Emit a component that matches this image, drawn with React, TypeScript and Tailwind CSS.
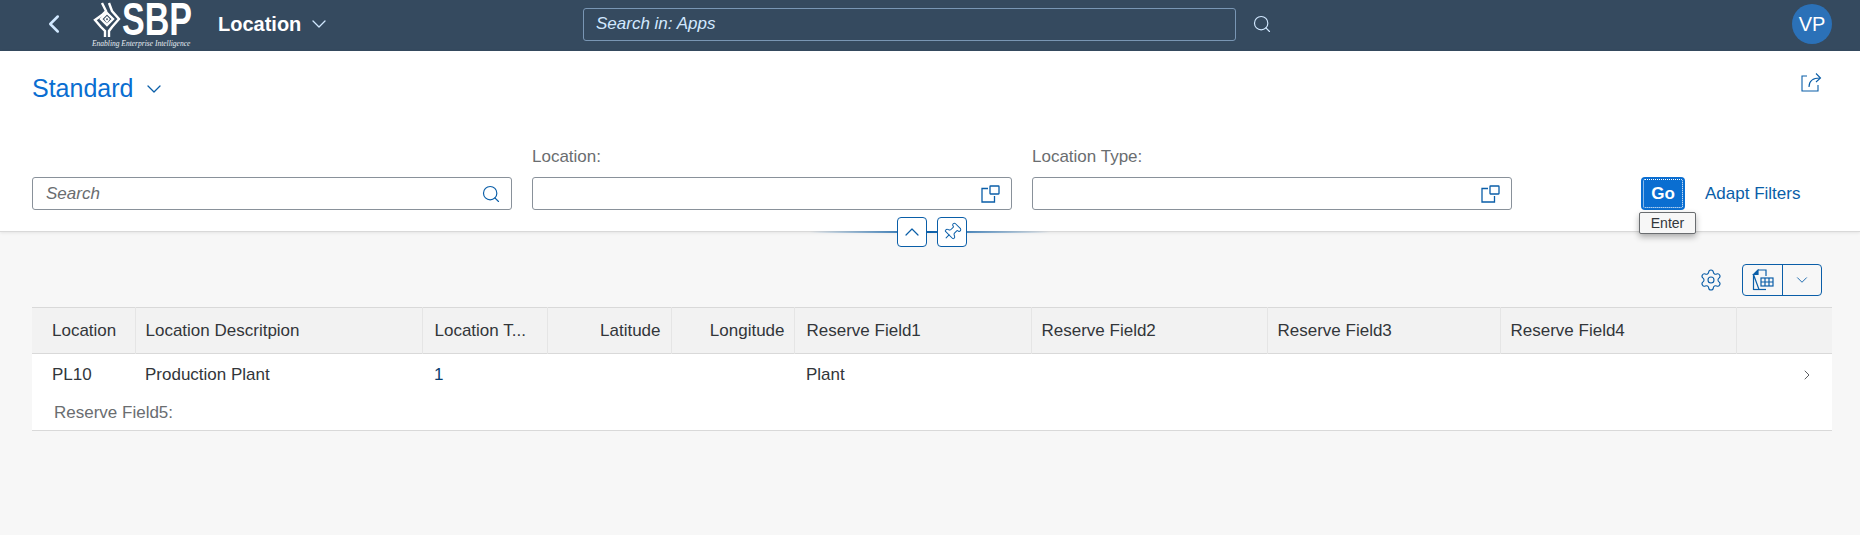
import { ChevronDown, ChevronLeft, ChevronRight, ChevronUp, Search, Settings, Pin } from "lucide-react";

const columns = [
  { label: "Location", width: "w-[103px]", pad: "pl-[20px] pr-2" },
  { label: "Location Descritpion", width: "w-[287px]", pad: "px-[10px]" },
  { label: "Location T...", width: "w-[125px]", pad: "px-[12px]" },
  { label: "Latitude", width: "w-[124px]", pad: "px-[10px] text-right" },
  { label: "Longitude", width: "w-[123px]", pad: "pl-2 pr-[9px] text-right" },
  { label: "Reserve Field1", width: "w-[237px]", pad: "px-[12px]" },
  { label: "Reserve Field2", width: "w-[236px]", pad: "px-[10px]" },
  { label: "Reserve Field3", width: "w-[233px]", pad: "px-[10px]" },
  { label: "Reserve Field4", width: "w-[236px]", pad: "px-[10px]" },
  { label: "", width: "w-[96px]", pad: "" },
];

function Logo() {
  return (
    <div className="w-[100px] h-[51px] flex flex-col items-start">
      <div className="flex items-center h-[39px] text-white">
        <svg width="30" height="36" viewBox="0 0 30 36" fill="none" stroke="#ffffff" strokeWidth="2.4">
          <path d="M10 1 L14 9 L10 13 L3 18 L9 25 L13 29 L13 35" />
          <path d="M17 1 L20 9 L27 17 L20 25 L17 29 L17 35" />
          <path d="M15 11 L21 17 L15 23 L9 17 Z" />
          <path d="M15 15 L17 17 L15 20 L13 17 Z" strokeWidth="1.4" />
        </svg>
        <span className="font-['Liberation_Sans'] font-bold text-[46px] leading-[39px] scale-x-[0.74] origin-left w-[95px] -mr-[25px] whitespace-nowrap">SBP</span>
      </div>
      <span className="font-['Liberation_Serif'] italic text-[7.5px] leading-[10px] text-[#e8edf2] whitespace-nowrap">Enabling Enterprise Intelligence</span>
    </div>
  );
}

function CopyIcon() {
  return (
    <svg width="20" height="18" viewBox="0 0 20 18" fill="none" stroke="#0a5ea8" strokeWidth="1.3">
      <path d="M7 3.5 H1 V17 H13.5 V11" />
      <rect x="9" y="1" width="9" height="8" rx="0.5" />
    </svg>
  );
}

function ShareIcon() {
  return (
    <svg width="21" height="20" viewBox="0 0 21 20" fill="none" stroke="#0a5ea8" strokeWidth="1.1">
      <path d="M6 4 H1 V19 H17 V13" />
      <path d="M8 15 C8 9 12 6 19 6" />
      <path d="M15 1.5 L19.5 6 L15 10" />
    </svg>
  );
}

function ExportIcon() {
  return (
    <svg width="22" height="22" viewBox="0 0 22 22" fill="none" stroke="#0a5ea8" strokeWidth="1.2">
      <path d="M6 1 H14 V7 M7 20.5 H1.5 V5.5 Z" />
      <path d="M1.5 5.5 L6 1 V5.5 Z" fill="#0a5ea8" />
      <path d="M1.5 20.5 H14" />
      <rect x="9" y="9" width="12" height="8" />
      <path d="M13 9 V17 M17 9 V17 M9 13 H21" />
    </svg>
  );
}

function FilterField({ label, children }: { label?: string; children: React.ReactNode }) {
  return (
    <div className="w-[480px] flex flex-col">
      <div className="h-[34px] text-[17px] leading-[28px] text-[#6a6d70]">{label}</div>
      <div className="h-[33px] bg-white border border-[#89919a] rounded-[3px] flex items-center justify-between pl-[13px] pr-[10px]">
        {children}
      </div>
    </div>
  );
}

export default function App() {
  return (
    <div className="w-[1860px] h-[535px] overflow-hidden bg-[#f7f7f7] text-[#32363a] font-['Liberation_Sans',sans-serif]">
      <header className="h-[51px] bg-[#354a5f] flex items-center pb-[3px]">
        <ChevronLeft size={30} strokeWidth={2} className="ml-[39px] text-[#d1e8ff]" />
        <div className="ml-[23px] self-start">
          <Logo />
        </div>
        <div className="ml-[26px] w-[365px] flex items-center">
          <span className="text-white font-bold text-[20px]">Location</span>
          <ChevronDown size={24} strokeWidth={1.3} className="ml-[6px] text-[#d1e8ff]" />
        </div>
        <div className="w-[653px] h-[33px] border border-[#7996b4] rounded-[3px] flex items-center pl-[12px] italic text-[17px] text-[#d1e8ff]">
          Search in: Apps
        </div>
        <Search size={20} strokeWidth={1.4} className="ml-[16px] text-[#d1e8ff]" />
        <div className="ml-auto mr-[28px] w-[40px] h-[40px] rounded-full bg-[#2b71b8] text-white text-[20px] flex items-center justify-center">
          VP
        </div>
      </header>

      <section className="relative h-[181px] bg-white border-b border-[#d9d9d9] shadow-[0_1px_3px_rgba(0,0,0,0.08)] px-[32px]">
        <div className="flex items-center justify-between h-[75px] pr-[6px]">
          <div className="flex items-center gap-[9px] text-[#0a6ed1]">
            <span className="text-[25px]">Standard</span>
            <ChevronDown size={24} strokeWidth={1.3} className="text-[#0a5ea8]" />
          </div>
          <div className="mb-[14px]">
            <ShareIcon />
          </div>
        </div>
        <div className="flex items-start gap-[20px] mt-[17px]">
          <FilterField>
            <span className="italic text-[17px] text-[#6a6d70]">Search</span>
            <Search size={20} strokeWidth={1.4} className="text-[#0a5ea8]" />
          </FilterField>
          <FilterField label="Location:">
            <span />
            <CopyIcon />
          </FilterField>
          <FilterField label="Location Type:">
            <span />
            <CopyIcon />
          </FilterField>
          <div className="flex items-center mt-[34px] ml-[109px]">
            <button className="w-[44px] h-[33px] rounded-[4px] bg-[#0a6ed1] text-white font-bold text-[17px] outline-1 outline-dotted outline-white -outline-offset-3">
              Go
            </button>
            <span className="ml-[20px] text-[17px] text-[#0a5ea8] whitespace-nowrap">Adapt Filters</span>
          </div>
        </div>
        <div className="absolute left-[1639px] top-[161px] w-[57px] h-[22px] z-10 bg-[#f7f7f7] border border-[#6a6d70] rounded-[2px] shadow-[0_3px_6px_rgba(0,0,0,0.3)] text-[14px] text-[#32363a] flex items-center justify-center">
          Enter
        </div>
        <div className="absolute left-[810px] top-[180px] w-[240px] h-[2px] bg-linear-to-r from-transparent via-[#0a5ea8] to-transparent" />
        <div className="absolute left-[897px] top-[166px] flex gap-[10px] z-10">
          <div className="w-[30px] h-[30px] bg-white border border-[#0a5ea8] rounded-[4px] flex items-center justify-center">
            <ChevronUp size={24} strokeWidth={1.2} className="text-[#0a5ea8]" />
          </div>
          <div className="w-[30px] h-[30px] bg-white border border-[#0a5ea8] rounded-[4px] flex items-center justify-center">
            <Pin size={20} strokeWidth={1.2} className="rotate-45 text-[#0a5ea8]" />
          </div>
        </div>
      </section>

      <main className="px-[32px] w-[1860px]">
        <div className="flex items-start justify-end h-[75px] pt-[32px] pr-[6px] gap-[19px]">
          <Settings size={24} strokeWidth={1.1} className="mt-[4px] text-[#0a5ea8]" />
          <div className="w-[80px] h-[32px] border border-[#0a5ea8] rounded-[4px] flex">
            <div className="w-[40px] border-r border-[#0a5ea8] flex items-center justify-center">
              <ExportIcon />
            </div>
            <div className="flex-1 flex items-center justify-center">
              <ChevronDown size={18} strokeWidth={1.2} className="text-[#0a5ea8]" />
            </div>
          </div>
        </div>
        <table className="w-[1800px] table-fixed border-collapse text-[17px]">
          <colgroup>
            {columns.map((c, i) => (
              <col key={i} className={c.width} />
            ))}
          </colgroup>
          <thead>
            <tr className="h-[46px] bg-[#f2f2f2] border-y border-[#d9d9d9]">
              {columns.map((c, i) => (
                <th key={i} className={`${c.pad} font-normal text-left whitespace-nowrap ${i < columns.length - 1 ? "border-r border-[#e5e5e5]" : ""}`}>
                  {c.label}
                </th>
              ))}
            </tr>
          </thead>
          <tbody className="bg-white">
            <tr className="h-[40px]">
              <td className="pl-[20px] pt-[2px]">PL10</td>
              <td className="px-[10px] pt-[2px]">Production Plant</td>
              <td className="px-[12px] pt-[2px] text-[#0a3d6e]">1</td>
              <td />
              <td />
              <td className="px-[12px] pt-[2px]">Plant</td>
              <td />
              <td />
              <td />
              <td className="pr-[17px] pt-[2px]">
                <ChevronRight size={16} strokeWidth={1.2} className="ml-auto text-[#32363a]" />
              </td>
            </tr>
            <tr className="h-[37px] border-b border-[#d9d9d9]">
              <td colSpan={10} className="pl-[22px] pt-[2px] text-[#6a6d70]">
                Reserve Field5:
              </td>
            </tr>
          </tbody>
        </table>
      </main>
    </div>
  );
}
